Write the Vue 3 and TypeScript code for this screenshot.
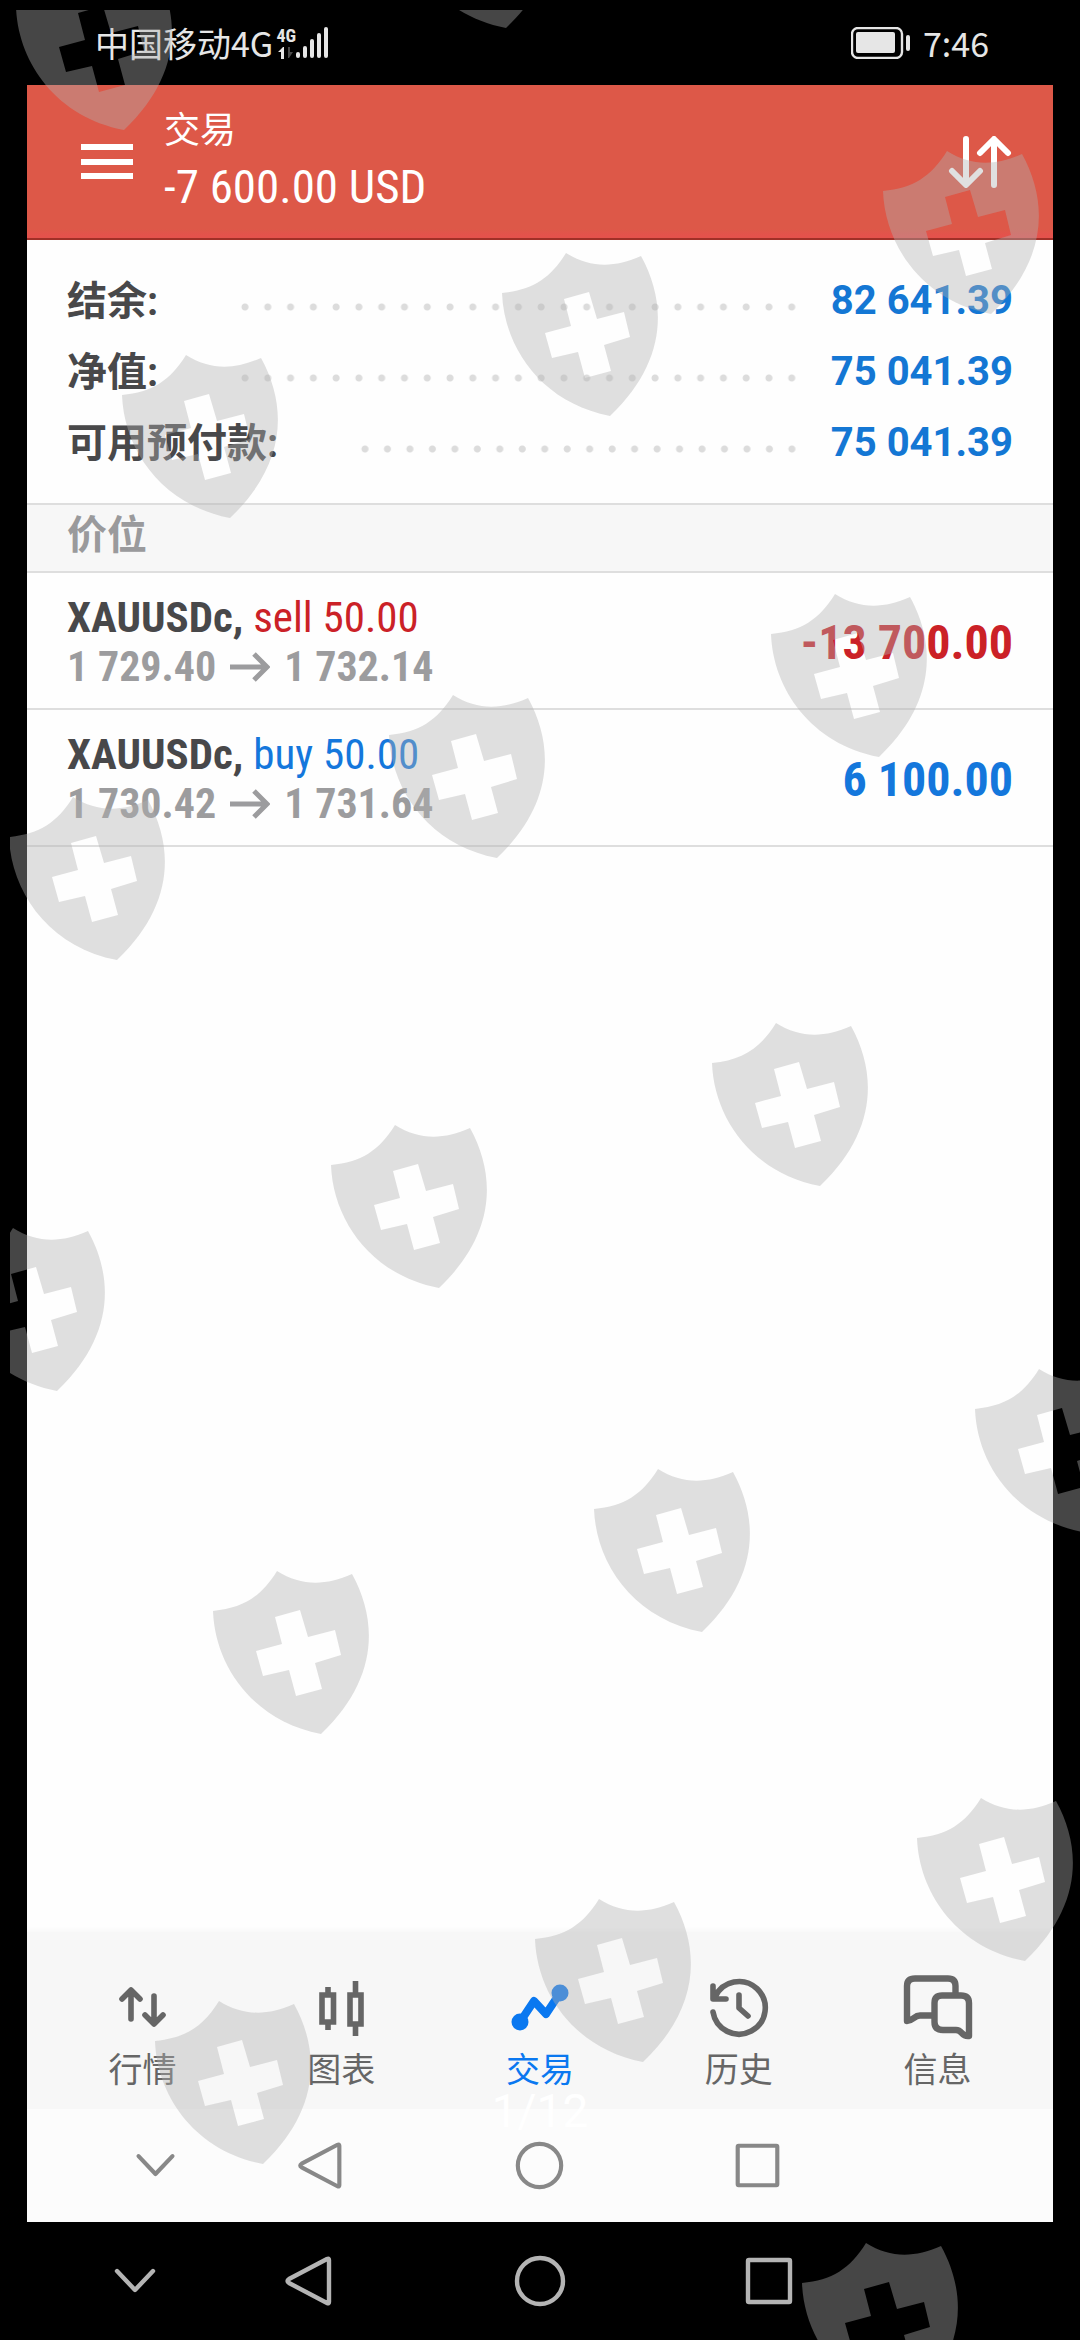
<script setup lang="ts">
interface SummaryLine {
  label: string
  value: string
}

interface Position {
  symbol: string
  side: 'sell' | 'buy'
  volume: string
  open: string
  current: string
  profit: string
}

interface Tab {
  id: string
  label: string
}

interface Point {
  x: number
  y: number
}

const summary: SummaryLine[] = [
  { label: '结余:', value: '82 641.39' },
  { label: '净值:', value: '75 041.39' },
  { label: '可用预付款:', value: '75 041.39' },
]

const positions: Position[] = [
  { symbol: 'XAUUSDc', side: 'sell', volume: '50.00', open: '1 729.40', current: '1 732.14', profit: '-13 700.00' },
  { symbol: 'XAUUSDc', side: 'buy', volume: '50.00', open: '1 730.42', current: '1 731.64', profit: '6 100.00' },
]

const tabs: Tab[] = [
  { id: 'quotes', label: '行情' },
  { id: 'chart', label: '图表' },
  { id: 'trade', label: '交易' },
  { id: 'history', label: '历史' },
  { id: 'messages', label: '信息' },
]

const activeTab = 'trade'

const shields: Point[] = [
  { x: 16, y: -33 },
  { x: 398, y: -135 },
  { x: 883, y: 151 },
  { x: 502, y: 253 },
  { x: 122, y: 355 },
  { x: 771, y: 594 },
  { x: 389, y: 695 },
  { x: 9, y: 797 },
  { x: 712, y: 1023 },
  { x: 331, y: 1125 },
  { x: -51, y: 1228 },
  { x: 975, y: 1369 },
  { x: 594, y: 1469 },
  { x: 213, y: 1571 },
  { x: 917, y: 1798 },
  { x: 535, y: 1899 },
  { x: 155, y: 2001 },
  { x: 802, y: 2243 },
]

const shieldPath =
  'M0 40C30 37 48 26 64 0C88 15 112 15 139 3C166 52 164 110 108 163C40 150 2 95 0 40Z' +
  'M62 46L87 39L95 66L122 59L128 84L102 92L109 118L83 125L76 99L50 105L43 80L69 73Z'
</script>

<template>
  <div class="viewer">
    <header class="status">
      <span class="carrier">中国移动4G</span>
      <span class="network">
        <span class="network-type">4G</span>
        <svg class="network-arrows" viewBox="0 0 17 12" aria-hidden="true">
          <path d="M0 5L5 0H6V12H3V5Z" fill="#e6e6e6" />
          <path d="M10 0H12V5H15L11 11H10Z" fill="#4a4a4a" />
        </svg>
      </span>
      <svg class="signal" viewBox="0 0 33 32" aria-hidden="true">
        <rect x="0" y="25" width="4" height="6" rx="2" />
        <rect x="7" y="19" width="4" height="12" rx="2" />
        <rect x="14" y="12" width="4" height="19" rx="2" />
        <rect x="21" y="6" width="4" height="25" rx="2" />
        <rect x="28" y="0" width="4" height="31" rx="2" />
      </svg>
      <svg class="battery" viewBox="0 0 60 32" aria-hidden="true">
        <rect x="1" y="1" width="50" height="30" rx="6" fill="none" stroke="#e6e6e6" stroke-width="2.4" />
        <rect x="5" y="5" width="39" height="21" rx="2" fill="#e6e6e6" />
        <rect x="55" y="8" width="4" height="16" rx="2" fill="#e6e6e6" />
      </svg>
      <time class="clock">7:46</time>
    </header>

    <main class="screen">
      <header class="app-bar">
        <button class="icon-button" type="button" aria-label="菜单">
          <svg class="menu-icon" viewBox="0 0 52 36">
            <path d="M0 3H52M0 18H52M0 32H52" stroke="#fff" stroke-width="6" />
          </svg>
        </button>
        <div class="heading">
          <h1 class="title">交易</h1>
          <p class="total">-7 600.00 USD</p>
        </div>
        <button class="icon-button" type="button" aria-label="排序">
          <svg class="sort-icon" viewBox="0 0 64 52" fill="none" stroke="#fff" stroke-width="6" stroke-linecap="round" stroke-linejoin="round">
            <path d="M18 3V48M4 35L18 49L32 35M46 49V4M32 17L46 3L60 17" />
          </svg>
        </button>
      </header>

      <dl class="summary">
        <div v-for="line in summary" :key="line.label" class="summary-line">
          <dt>{{ line.label }}</dt>
          <dd class="leader" aria-hidden="true"></dd>
          <dd class="amount">{{ line.value }}</dd>
        </div>
      </dl>

      <h2 class="section">价位</h2>

      <ul class="positions">
        <li v-for="position in positions" :key="position.open" class="position" :class="position.side">
          <div class="deal">
            <p class="instrument">
              <strong>{{ position.symbol }}, </strong>
              <span class="side">{{ position.side }} {{ position.volume }}</span>
            </p>
            <p class="prices">
              <span>{{ position.open }}</span>
              <svg class="arrow" viewBox="0 0 40 30" aria-label="→">
                <path d="M0 15H37M24 2L37 15L24 28" fill="none" stroke="#9c9c9e" stroke-width="5" />
              </svg>
              <span>{{ position.current }}</span>
            </p>
          </div>
          <strong class="profit">{{ position.profit }}</strong>
        </li>
      </ul>

      <nav class="tabs">
        <button
          v-for="tab in tabs"
          :key="tab.id"
          type="button"
          class="tab"
          :class="{ active: tab.id === activeTab }"
        >
          <svg class="tab-icon" viewBox="0 0 72 72" fill="none" stroke="currentColor" stroke-width="5.6" aria-hidden="true">
            <g v-if="tab.id === 'quotes'" stroke-linecap="round" stroke-linejoin="round">
              <path d="M25 20V48M16 28L25 19L34 28M48 25V52M39 44L48 53L57 44" />
            </g>
            <g v-else-if="tab.id === 'chart'">
              <path d="M17 24H28.500V51H17ZM45 24H56V53H45ZM23 16V24M23 51V59M50.500 10V24M50.500 53V65" />
            </g>
            <g v-else-if="tab.id === 'trade'" stroke-width="8" stroke-linejoin="round">
              <path d="M16 51L30 30L42 43L56 22" />
              <circle cx="16" cy="51" r="8.500" fill="currentColor" stroke="none" />
              <circle cx="56" cy="22" r="8.500" fill="currentColor" stroke="none" />
            </g>
            <g v-else-if="tab.id === 'history'" stroke-linecap="round" stroke-linejoin="round">
              <path d="M10 41A26.300 26.300 0 1 0 12 26M10 15V28H23M36 24V37L45 45" />
            </g>
            <g v-else stroke-width="6.400" stroke-linejoin="round">
              <path d="M53.500 24V15Q53.500 7.500 46 7.500H13Q5 7.500 5 15V50C11 50 12 44.500 18 44.500H32" />
              <path d="M54 59H41Q32.500 59 32.500 51V32Q32.500 24.500 40 24.500H59Q67 24.500 67 32V65C59 66 61 59 54 59Z" />
            </g>
          </svg>
          <span>{{ tab.label }}</span>
        </button>
      </nav>

      <div class="system-bar inner">
        <button type="button" aria-label="收起">
          <svg viewBox="0 0 52 52"><path d="M8 16L26 35L44 16" /></svg>
        </button>
        <button type="button" aria-label="返回">
          <svg viewBox="0 0 52 52"><path d="M44 4Q46 3 46 5V47Q46 49 44 48L6 28Q3 26 6 24Z" /></svg>
        </button>
        <button type="button" aria-label="主页">
          <svg viewBox="0 0 52 52"><circle cx="26" cy="26" r="23" /></svg>
        </button>
        <button type="button" aria-label="最近任务">
          <svg viewBox="0 0 52 52"><rect x="5" y="5" width="42" height="42" rx="1" /></svg>
        </button>
      </div>
    </main>

    <footer class="system-bar outer">
      <button type="button" aria-label="收起">
        <svg viewBox="0 0 52 52"><path d="M8 16L26 35L44 16" /></svg>
      </button>
      <button type="button" aria-label="返回">
        <svg viewBox="0 0 52 52"><path d="M44 4Q46 3 46 5V47Q46 49 44 48L6 28Q3 26 6 24Z" /></svg>
      </button>
      <button type="button" aria-label="主页">
        <svg viewBox="0 0 52 52"><circle cx="26" cy="26" r="23" /></svg>
      </button>
      <button type="button" aria-label="最近任务">
        <svg viewBox="0 0 52 52"><rect x="5" y="5" width="42" height="42" rx="1" /></svg>
      </button>
    </footer>

    <p class="counter">1/12</p>

    <svg class="watermark" viewBox="10 10 1070 2330" preserveAspectRatio="xMinYMin slice" aria-hidden="true">
      <path
        v-for="shield in shields"
        :key="`${shield.x},${shield.y}`"
        :d="shieldPath"
        :transform="`translate(${shield.x} ${shield.y})`"
        fill-rule="evenodd"
      />
    </svg>
  </div>
</template>

<style>
body {
  margin: 0;
  background: #000;
}
</style>

<style scoped>
.viewer {
  --condensed: 'Roboto Condensed', 'Liberation Sans Narrow', Roboto, 'Noto Sans CJK SC', sans-serif;
  position: relative;
  display: flex;
  flex-direction: column;
  min-height: 100vh;
  overflow: hidden;
  background: #000;
  font-family: Roboto, 'Noto Sans CJK SC', sans-serif;
}

h1,
h2,
p,
dl,
dd,
ul {
  margin: 0;
  padding: 0;
}

button {
  padding: 0;
  border: 0;
  background: none;
  font: inherit;
  color: inherit;
}

svg {
  display: block;
}

.status {
  display: flex;
  align-items: center;
  height: 85px;
  padding: 0 91px 0 95px;
  box-sizing: border-box;
  color: #e6e6e6;
  font-family: 'Noto Sans CJK SC', sans-serif;
  font-size: 34px;
}

.network {
  display: flex;
  flex-direction: column;
  align-items: center;
  gap: 2px;
  width: 20px;
  margin-left: 3px;
}

.network-type {
  font-family: var(--condensed);
  font-size: 18px;
  line-height: 18px;
  font-weight: 700;
}

.network-arrows {
  width: 17px;
  height: 12px;
}

.signal {
  width: 33px;
  height: 32px;
  fill: #e6e6e6;
}

.battery {
  width: 60px;
  height: 32px;
  margin-left: auto;
}

.clock {
  margin-left: 12px;
}

.screen {
  display: flex;
  flex: 1;
  flex-direction: column;
  margin: 0 27px;
  background: #fefefe;
}

.app-bar {
  display: flex;
  align-items: center;
  height: 155px;
  padding: 0 41px 0 54px;
  box-sizing: border-box;
  border-bottom: 2px solid #a03028;
  background: linear-gradient(#dd5848 144px, #e4524c 150px);
  color: #fff;
}

.menu-icon {
  width: 52px;
  height: 36px;
}

.heading {
  flex: 1;
  margin-left: 31px;
}

.title {
  font-size: 36px;
  line-height: 50px;
  font-weight: 400;
}

.total {
  font-family: var(--condensed);
  font-size: 47px;
  line-height: 62px;
}

.sort-icon {
  width: 64px;
  height: 52px;
}

.summary {
  padding: 24px 40px 26px;
}

.summary-line {
  display: flex;
  align-items: center;
  height: 71px;
  font-size: 40px;
  font-weight: 700;
  color: #48484a;
}

.summary-line dt {
  padding-bottom: 3px;
}

.leader {
  flex: 1;
  height: 8px;
  margin: 14px 28px 0 76px;
  background: radial-gradient(circle, #dcdcdc 3px, transparent 4px) 0 0 / 22px 8px;
  background-repeat: space no-repeat;
}

.amount {
  padding-top: 2px;
  color: #1477d4;
}

.section {
  height: 70px;
  padding: 0 40px;
  box-sizing: border-box;
  border-top: 2px solid #dedede;
  border-bottom: 2px solid #dedede;
  background: #f7f7f7;
  color: #9a9a9c;
  font-size: 40px;
  line-height: 62px;
  font-weight: 700;
}

.positions {
  list-style: none;
}

.position {
  display: flex;
  align-items: center;
  justify-content: space-between;
  height: 137px;
  padding: 3px 40px 0;
  box-sizing: border-box;
  border-bottom: 2px solid #dedede;
  font-family: var(--condensed);
  line-height: 49px;
}

.instrument {
  color: #48484a;
  font-size: 43px;
}

.sell {
  --tone: #cb2127;
}

.buy {
  --tone: #1477dc;
}

.side,
.profit {
  color: var(--tone);
}

.prices {
  display: flex;
  align-items: center;
  gap: 14px;
  color: #9c9c9e;
  font-size: 42px;
  font-weight: 700;
}

.arrow {
  width: 40px;
  height: 30px;
}

.profit {
  font-size: 48px;
}

.tabs {
  display: flex;
  height: 177px;
  margin-top: auto;
  padding: 0 16px;
  background: #f7f7f7;
  box-shadow: 0 -2px 5px rgb(0 0 0 / 3%);
}

.tab {
  display: flex;
  flex: 1;
  flex-direction: column;
  align-items: center;
  gap: 10px;
  padding-top: 39px;
  color: #666;
  font-size: 34px;
  line-height: 34px;
}

.tab.active {
  color: #0a78f0;
}

.tab-icon {
  width: 72px;
  height: 72px;
}

.system-bar {
  display: grid;
  grid-template-columns: 49fr 172fr 175fr 288fr 170fr 226fr;
  align-items: center;
}

.system-bar button {
  display: flex;
  justify-content: center;
}

.system-bar button:first-child {
  grid-column: 2;
}

.system-bar svg {
  fill: none;
  stroke: currentColor;
  stroke-width: 4.4;
  stroke-linecap: round;
  stroke-linejoin: round;
}

.inner {
  height: 113px;
  background: #fcfcfc;
  color: #888;
}

.inner svg {
  width: 49px;
  height: 49px;
}

.outer {
  height: 118px;
  color: #b4b4b4;
}

.outer svg {
  width: 52px;
  height: 52px;
}

.counter {
  position: absolute;
  right: 0;
  bottom: 206px;
  left: 0;
  color: #fff;
  font-size: 46px;
  line-height: 46px;
  text-align: center;
}

.watermark {
  position: absolute;
  top: 10px;
  left: 10px;
  width: calc(100% - 10px);
  height: calc(100% - 10px);
  fill: rgb(177 177 177 / 39.6%);
  pointer-events: none;
}
</style>
